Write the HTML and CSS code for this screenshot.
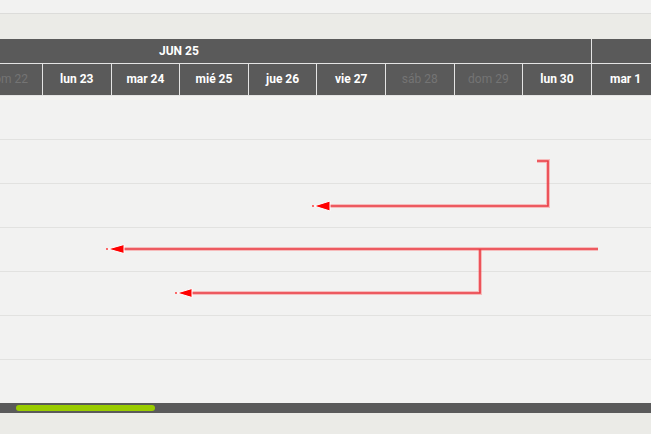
FILE: index.html
```html
<!DOCTYPE html>
<html lang="es">
<head>
<meta charset="utf-8">
<title>Gantt</title>
<link rel="stylesheet" href="styles.css">
</head>
<body>
<div class="page">
  <div class="topbar"></div>
  <div class="toolbar"></div>
  <div class="timeline">
    <div class="months">
      <div class="month month-jun">JUN 25</div>
      <div class="month month-jul"></div>
    </div>
    <div class="days">
      <div class="day weekend">dom 22</div>
      <div class="day">lun 23</div>
      <div class="day">mar 24</div>
      <div class="day">mié 25</div>
      <div class="day">jue 26</div>
      <div class="day">vie 27</div>
      <div class="day weekend">sáb 28</div>
      <div class="day weekend">dom 29</div>
      <div class="day">lun 30</div>
      <div class="day">mar 1</div>
    </div>
  </div>
  <div class="grid">
    <div class="row"></div>
    <div class="row"></div>
    <div class="row"></div>
    <div class="row"></div>
    <div class="row"></div>
    <div class="row"></div>
    <div class="row"></div>
  </div>
  <div class="scrollbar"><div class="thumb"></div></div>
  <div class="footer"></div>

  <svg class="links" width="651" height="434" viewBox="0 0 651 434">
    <g class="link-glow">
      <path d="M537 161 H548 V206 H326"/>
      <path d="M598 249 H122"/>
      <path d="M480 249 V293 H190"/>
    </g>
    <g class="link-line">
      <path d="M537 161 H548 V206 H326"/>
      <path d="M598 249 H122"/>
      <path d="M480 249 V293 H190"/>
    </g>
    <g class="link-head">
      <polygon points="314,206 330,201 330,211"/>
      <polygon points="108,249 124,244.5 124,253.5"/>
      <polygon points="177,293 192,288.5 192,297.5"/>
    </g>
    <g class="link-dot">
      <circle cx="313" cy="206" r="0.9"/>
      <circle cx="107" cy="249" r="0.9"/>
      <circle cx="176" cy="293" r="0.9"/>
    </g>
  </svg>
</div>
</body>
</html>
```

FILE: styles.css
```css
* { box-sizing: border-box; }

html, body {
  margin: 0;
  padding: 0;
  width: 651px;
  height: 434px;
  overflow: hidden;
  background: #ebebe7;
  font-family: Roboto, "Liberation Sans", Arial, sans-serif;
}

.page {
  position: relative;
  width: 651px;
  height: 434px;
  display: flex;
  flex-direction: column;
}

.topbar {
  height: 14px;
  background: #f2f2f1;
  border-bottom: 1px solid #dcdcda;
  box-shadow: 0 1px 1px rgba(0,0,0,0.04);
}

.toolbar {
  height: 25px;
  background: #ebebe7;
}

.timeline {
  background: #5a5a5a;
  color: #ffffff;
  overflow: hidden;
}

.months {
  display: flex;
  height: 25px;
  border-bottom: 1px solid #e4e4e4;
}

.month {
  font-size: 12px;
  font-weight: 700;
  line-height: 24px;
  white-space: nowrap;
}

.month-jun {
  flex: 0 0 592px;
  padding-left: 159px;
  border-right: 1px solid #e4e4e4;
}

.month-jul {
  flex: 1 1 auto;
}

.days {
  display: flex;
  height: 32px;
  margin-left: -26.6px;
  border-bottom: 1px solid #e4e4e4;
}

.day {
  flex: 0 0 68.6px;
  border-left: 1px solid #e4e4e4;
  text-align: center;
  font-size: 12px;
  font-weight: 700;
  line-height: 31px;
  white-space: nowrap;
  color: #ffffff;
}

.day:first-child {
  border-left: none;
}

.day.weekend {
  font-weight: 400;
  color: #747474;
}

.grid {
  background: #f2f2f1;
  display: flex;
  flex-direction: column;
}

.row {
  height: 44px;
  border-bottom: 1px solid #e2e2e0;
}

.row:last-child {
  height: 43px;
  border-bottom: none;
}

.scrollbar {
  height: 10px;
  background: #5a5a5a;
  display: flex;
  align-items: center;
  padding-left: 16px;
}

.thumb {
  width: 139px;
  height: 6px;
  border-radius: 3px;
  background: #99cc00;
}

.footer {
  flex: 1 1 auto;
  background: #ebebe7;
}

.links {
  position: absolute;
  left: 0;
  top: 0;
  pointer-events: none;
}

.link-glow path {
  fill: none;
  stroke: rgba(255, 90, 90, 0.35);
  stroke-width: 4;
}

.link-line path {
  fill: none;
  stroke: #ea3a42;
  stroke-width: 1.6;
}

.link-head polygon {
  fill: #ff0000;
  stroke: #ffffff;
  stroke-width: 1;
  stroke-linejoin: round;
}

.link-dot circle {
  fill: #ff2a2a;
}
```
